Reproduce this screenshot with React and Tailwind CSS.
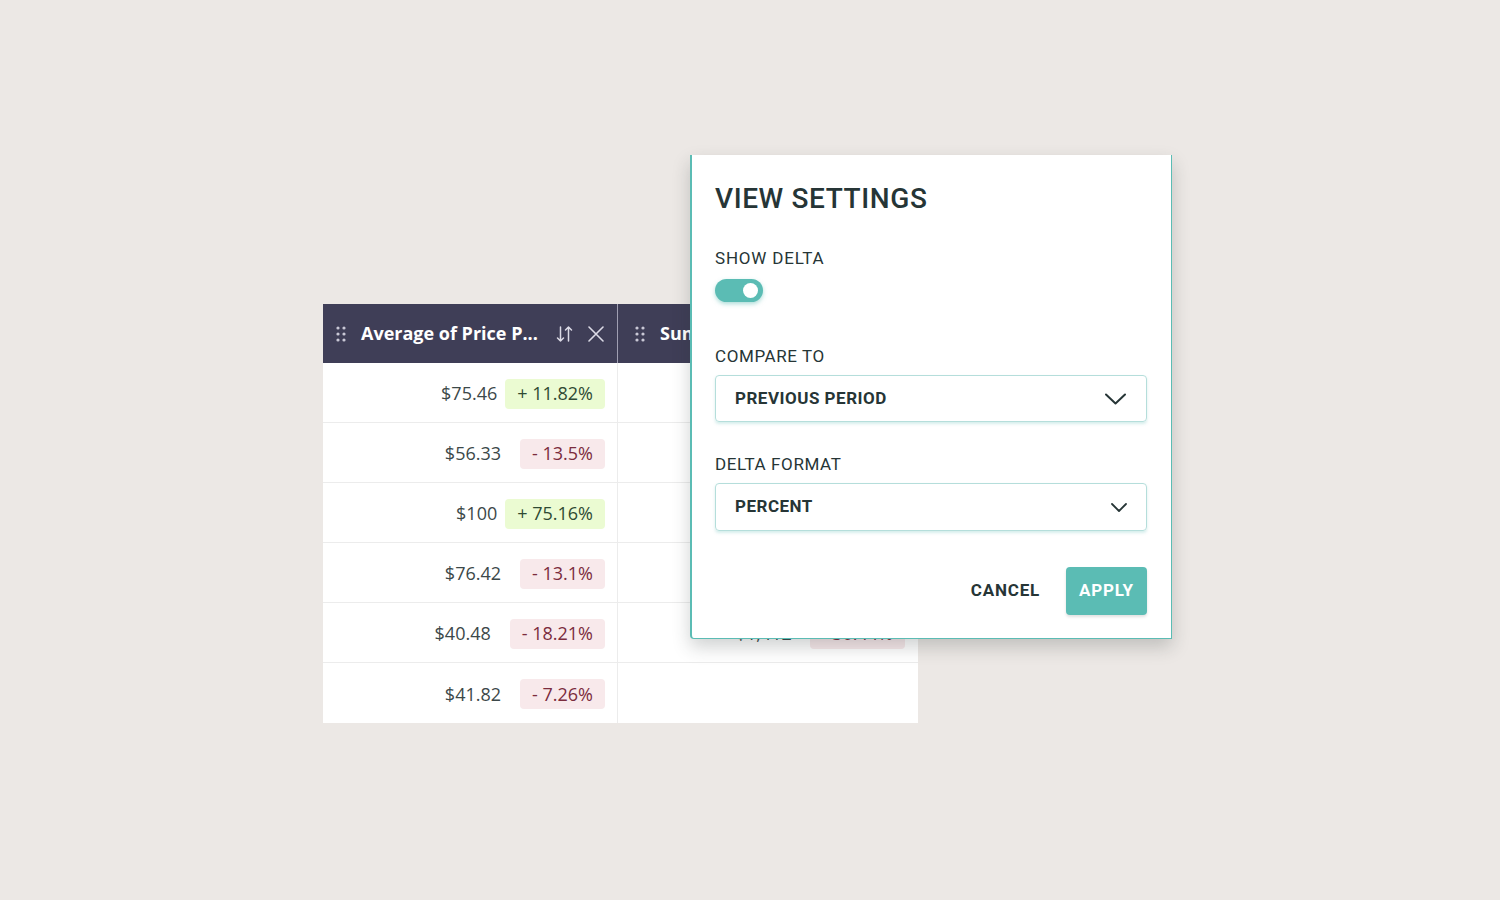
import React from "react";

const rows = [
  { v: "$75.46", d: "+ 11.82%", up: true, v2: "", d2: "" },
  { v: "$56.33", d: "- 13.5%", up: false, v2: "", d2: "" },
  { v: "$100", d: "+ 75.16%", up: true, v2: "", d2: "" },
  { v: "$76.42", d: "- 13.1%", up: false, v2: "", d2: "" },
  { v: "$40.48", d: "- 18.21%", up: false, v2: "$1,412", d2: "- 30.44%" },
  { v: "$41.82", d: "- 7.26%", up: false, v2: "", d2: "" },
];

function Grip() {
  return (
    <svg width="10" height="16" viewBox="0 0 10 16" className="shrink-0">
      {[2, 8].map((x) =>
        [2, 8, 14].map((y) => <circle key={x + "-" + y} cx={x} cy={y} r="1.6" fill="#c9c8d6" />)
      )}
    </svg>
  );
}

function SortIcon() {
  return (
    <svg width="17" height="18" viewBox="0 0 17 18" fill="none" stroke="#dcdbe6" strokeWidth="1.5" strokeLinecap="round" strokeLinejoin="round" className="ml-auto">
      <path d="M4.5 2v14M1.5 13l3 3 3-3" />
      <path d="M12.5 16V2M9.5 5l3-3 3 3" />
    </svg>
  );
}

function CloseIcon() {
  return (
    <svg width="16" height="16" viewBox="0 0 16 16" fill="none" stroke="#dcdbe6" strokeWidth="1.6" strokeLinecap="round" className="ml-[15px]">
      <path d="M1 1l14 14M15 1L1 15" />
    </svg>
  );
}

function Badge({ text, up }) {
  return (
    <span
      className={
        "rounded-[4px] h-[30px] px-[12px] flex items-center text-[18px] " +
        (up ? "bg-[#ebfbd2] text-[#2f4a33]" : "bg-[#f8e9eb] text-[#7b2c3d]")
      }
    >
      {text}
    </span>
  );
}

export default function App() {
  return (
    <div
      className="relative w-[1500px] h-[900px] bg-[#ece8e5] overflow-hidden"
      style={{ fontFamily: "'Open Sans', 'Liberation Sans', sans-serif" }}
    >
      <div className="pt-[304px] pl-[323px]">
        <div className="w-[595px] bg-white">
          <div className="flex h-[59px] bg-[#3f3e57] text-white">
            <div className="w-[295px] flex items-center pl-[13px] pr-[13px] border-r border-[#a09fb2]">
              <Grip />
              <span className="ml-[15px] font-bold text-[18px]">Average of Price P...</span>
              <SortIcon />
              <CloseIcon />
            </div>
            <div className="flex-1 flex items-center pl-[17px]">
              <Grip />
              <span className="ml-[15px] font-bold text-[18px]">Sum of Revenue</span>
            </div>
          </div>
          {rows.map((r, i) => (
            <div key={i} className="flex h-[60px] border-b border-[#ececec] last:border-b-0">
              <div className="w-[295px] border-r border-[#ececec] flex items-center justify-end gap-[8px] pr-[12px] pt-[2px] text-[#3c4849] text-[18px]">
                <span className={r.up ? "" : "mr-[11px]"}>{r.v}</span>
                <Badge text={r.d} up={r.up} />
              </div>
              <div className="flex-1 flex items-center justify-end gap-[18px] pr-[13px] pt-[2px] text-[#3c4849] text-[18px]">
                {r.v2 && <span>{r.v2}</span>}
                {r.d2 && <Badge text={r.d2} up={false} />}
              </div>
            </div>
          ))}
        </div>
      </div>

      <div
        className="absolute left-[690px] top-[155px] w-[482px] h-[484px] bg-white border-l-2 border-r border-b border-[#5bbcb4] rounded-bl-[4px] shadow-[0_8px_18px_rgba(40,50,50,0.22)] pl-[23px] pr-[24px] pt-[26px] text-[#263536]"
        style={{ fontFamily: "Roboto, 'DejaVu Sans', sans-serif" }}
      >
        <div className="text-[28px] font-medium tracking-[0.6px] leading-[36px]">VIEW SETTINGS</div>
        <div className="mt-[30px] text-[17px] font-normal tracking-[0.8px] leading-[22px]">SHOW DELTA</div>
        <div className="mt-[10px] w-[48px] h-[23px] rounded-full bg-[#5bbcb4] flex items-center justify-end pr-[5px] shadow-[0_2px_4px_rgba(91,188,180,0.5)]">
          <div className="w-[15px] h-[15px] rounded-full bg-white" />
        </div>
        <div className="mt-[43px] text-[17px] font-normal tracking-[0.6px] leading-[22px]">COMPARE TO</div>
        <div className="mt-[8px] h-[47px] rounded-[4px] border border-[#b5dedb] shadow-[0_2px_3px_rgba(91,188,180,0.25)] flex items-center pl-[19px] pr-[20px]">
          <span className="text-[17px] font-bold tracking-[0.5px]">PREVIOUS PERIOD</span>
          <svg width="21" height="12" viewBox="0 0 21 12" fill="none" stroke="#263536" strokeWidth="2" strokeLinecap="round" strokeLinejoin="round" className="ml-auto">
            <path d="M1 1.5l9.5 9 9.5-9" />
          </svg>
        </div>
        <div className="mt-[31px] text-[17px] font-normal tracking-[0.6px] leading-[22px]">DELTA FORMAT</div>
        <div className="mt-[8px] h-[48px] rounded-[4px] border border-[#b5dedb] shadow-[0_2px_3px_rgba(91,188,180,0.25)] flex items-center pl-[19px] pr-[19px]">
          <span className="text-[17px] font-bold tracking-[0.5px]">PERCENT</span>
          <svg width="16" height="9" viewBox="0 0 16 9" fill="none" stroke="#263536" strokeWidth="1.8" strokeLinecap="round" strokeLinejoin="round" className="ml-auto">
            <path d="M1 1l7 7 7-7" />
          </svg>
        </div>
        <div className="mt-[36px] flex items-center justify-end">
          <span className="text-[17px] font-bold tracking-[0.8px] mr-[26px]">CANCEL</span>
          <div className="w-[81px] h-[48px] rounded-[4px] bg-[#5bbcb4] text-white flex items-center justify-center text-[17px] font-bold tracking-[0.8px] shadow-[0_2px_3px_rgba(0,0,0,0.12)]">
            APPLY
          </div>
        </div>
      </div>
    </div>
  );
}
